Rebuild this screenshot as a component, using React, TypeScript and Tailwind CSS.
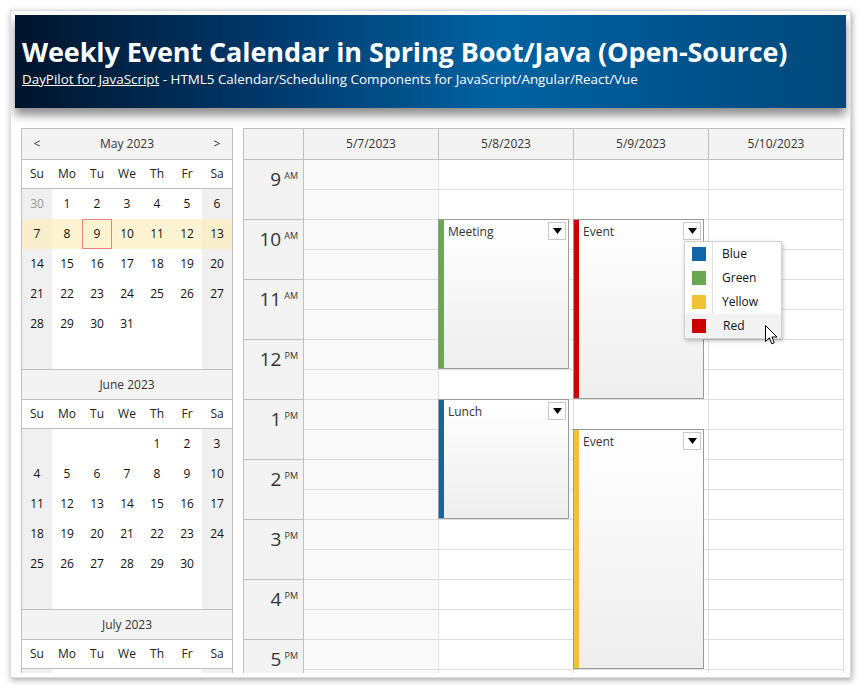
import React from "react";

type Cell = number | null;

const may: Cell[][] = [
  [30, 1, 2, 3, 4, 5, 6],
  [7, 8, 9, 10, 11, 12, 13],
  [14, 15, 16, 17, 18, 19, 20],
  [21, 22, 23, 24, 25, 26, 27],
  [28, 29, 30, 31, null, null, null],
  [null, null, null, null, null, null, null],
];
const june: Cell[][] = [
  [null, null, null, null, 1, 2, 3],
  [4, 5, 6, 7, 8, 9, 10],
  [11, 12, 13, 14, 15, 16, 17],
  [18, 19, 20, 21, 22, 23, 24],
  [25, 26, 27, 28, 29, 30, null],
  [null, null, null, null, null, null, null],
];
const july: Cell[][] = [[null, null, null, null, null, null, null]];

const dayNames = ["Su", "Mo", "Tu", "We", "Th", "Fr", "Sa"];

function Month({
  title,
  weeks,
  arrows,
  isMay,
}: {
  title: string;
  weeks: Cell[][];
  arrows?: boolean;
  isMay?: boolean;
}) {
  return (
    <div className="border-b border-[#c0c0c0]">
      <div
        className={`${isMay ? "h-[31px]" : "h-[30px]"} bg-[#f3f3f3] border-b border-[#c0c0c0] flex items-center text-[12px] text-[#333]`}
      >
        <div className="w-[30px] text-center">{arrows ? "<" : ""}</div>
        <div className="flex-1 text-center">{title}</div>
        <div className="w-[30px] text-center">{arrows ? ">" : ""}</div>
      </div>
      <div className="h-[29px] border-b border-[#c0c0c0] grid grid-cols-7 bg-white text-[12px] text-[#222]">
        {dayNames.map((d) => (
          <div key={d} className="flex items-center justify-center">
            {d}
          </div>
        ))}
      </div>
      <div>
        {weeks.map((w, wi) => {
          const selected = isMay && wi === 1;
          return (
            <div key={wi} className="grid grid-cols-7 h-[30px] text-[12px]">
              {w.map((d, di) => {
                const weekend = di === 0 || di === 6;
                const other = isMay && wi === 0 && di === 0;
                const today = isMay && d === 9;
                let bg = weekend ? "bg-[#f0f0f0]" : "bg-white";
                if (selected) bg = weekend ? "bg-[#f8eecb]" : "bg-[#fff4d1]";
                return (
                  <div
                    key={di}
                    className={`${bg} flex items-center justify-center ${
                      other ? "text-[#999]" : "text-[#111]"
                    } ${today ? "border border-[#f08080]" : ""}`}
                  >
                    {d ?? ""}
                  </div>
                );
              })}
            </div>
          );
        })}
      </div>
    </div>
  );
}

const hours: { h: string; s: string }[] = [
  { h: "9", s: "AM" },
  { h: "10", s: "AM" },
  { h: "11", s: "AM" },
  { h: "12", s: "PM" },
  { h: "1", s: "PM" },
  { h: "2", s: "PM" },
  { h: "3", s: "PM" },
  { h: "4", s: "PM" },
  { h: "5", s: "PM" },
];

const days = ["5/7/2023", "5/8/2023", "5/9/2023", "5/10/2023"];

type Ev = { text: string; top: number; height: number; color: string };
const events: Record<number, Ev[]> = {
  1: [
    { text: "Meeting", top: 59, height: 150, color: "#6aa84f" },
    { text: "Lunch", top: 239, height: 120, color: "#1066a8" },
  ],
  2: [
    { text: "Event", top: 59, height: 180, color: "#cc0000" },
    { text: "Event", top: 269, height: 240, color: "#f1c232" },
  ],
};

function EventBox({ ev }: { ev: Ev }) {
  return (
    <div
      className="absolute left-[-1px] w-[131px] border border-[#999] bg-[linear-gradient(to_bottom,#ffffff,#eeeeee)] flex overflow-hidden"
      style={{ top: ev.top, height: ev.height }}
    >
      <div className="w-[5px] shrink-0" style={{ backgroundColor: ev.color }} />
      <div className="flex-1 pl-[4px] pt-[4px] text-[12px] text-[#333] leading-[16px]">{ev.text}</div>
      <div className="absolute right-[2px] top-[2px] w-[18px] h-[18px] border border-[#c8c8c8] bg-white flex items-center justify-center">
        <svg width="9" height="6" viewBox="0 0 9 6">
          <path d="M0 0 L9 0 L4.5 6 Z" fill="#000" />
        </svg>
      </div>
    </div>
  );
}

export default function App() {
  return (
    <div
      className="relative w-[860px] h-[690px] bg-white overflow-hidden"
      style={{ fontFamily: '"Open Sans", "Noto Sans", sans-serif' }}
    >
      <div className="ml-[10px] mt-[10px] w-[841px] h-[668px] bg-white border border-[#dcdcdc] shadow-[1px_2px_6px_rgba(0,0,0,0.35)] p-[4px] overflow-hidden flex flex-col">
        <div className="relative z-10 h-[93px] shrink-0 bg-[linear-gradient(to_right,#00142a_0%,#00386a_30%,#0062a0_58%,#00548e_80%,#00487a_100%)] shadow-[0_7px_9px_rgba(0,0,0,0.45)] pl-[7px] pt-[19px] text-white">
          <div className="text-[27px] font-bold leading-[36px] tracking-[-0.1px] whitespace-nowrap">
            Weekly Event Calendar in Spring Boot/Java (Open-Source)
          </div>
          <div className="text-[13.4px] leading-[18px] whitespace-nowrap">
            <span className="underline">DayPilot for JavaScript</span> - HTML5 Calendar/Scheduling Components for
            JavaScript/Angular/React/Vue
          </div>
        </div>
        <div className="flex pl-[6px] pt-[20px] gap-[10px] h-[566px] overflow-hidden">
          <div className="w-[212px] shrink-0 border-l border-r border-t border-[#c0c0c0] self-start">
            <Month title="May 2023" weeks={may} arrows isMay />
            <Month title="June 2023" weeks={june} />
            <Month title="July 2023" weeks={july} />
          </div>
          <div className="w-[602px] shrink-0 border-l border-t border-[#c0c0c0] self-start">
            <div className="flex h-[31px]">
              <div className="w-[60px] bg-[#f3f3f3] border-r border-b border-[#c0c0c0]" />
              {days.map((d) => (
                <div
                  key={d}
                  className="w-[135px] bg-[#f3f3f3] border-r border-b border-[#c0c0c0] flex items-center justify-center text-[12px] text-[#333]"
                >
                  {d}
                </div>
              ))}
            </div>
            <div className="flex">
              <div className="w-[60px]">
                {hours.map((h) => (
                  <div
                    key={h.h}
                    className="h-[60px] bg-[#f3f3f3] border-r border-b border-[#c0c0c0] flex justify-end pr-[5px] pt-[7px] text-[#333]"
                  >
                    <span className="text-[19px] leading-[24px]">{h.h}</span>
                    <span className="text-[9px] leading-[12px] ml-[3px] mt-[3px]">{h.s}</span>
                  </div>
                ))}
              </div>
              {days.map((d, i) => (
                <div key={d} className={`relative w-[135px] ${i === 0 ? "bg-[#f9f9f9]" : "bg-white"}`}>
                  {Array.from({ length: 18 }).map((_, k) => (
                    <div key={k} className="h-[30px] border-r border-b border-[#dddddd]" />
                  ))}
                  {(events[i] || []).map((ev, k) => (
                    <EventBox key={k} ev={ev} />
                  ))}
                </div>
              ))}
            </div>
          </div>
        </div>
      </div>

      <div className="absolute left-[684px] top-[241px] w-[98px] bg-white border border-[#d0d0d0] shadow-[1px_2px_4px_rgba(0,0,0,0.25)] text-[12px] text-[#111]">
        {[
          { n: "Blue", c: "#1066a8" },
          { n: "Green", c: "#6aa84f" },
          { n: "Yellow", c: "#f1c232" },
          { n: "Red", c: "#cc0000" },
        ].map((it, k) => (
          <div key={it.n} className={`flex h-[24px] items-stretch ${k === 3 ? "bg-[#f2f2f2]" : ""}`}>
            <div className={`w-[28px] flex items-center justify-center ${k === 3 ? "" : "border-r border-[#e0e0e0]"}`}>
              <div className="w-[14px] h-[14px]" style={{ backgroundColor: it.c }} />
            </div>
            <div className={`flex items-center pl-[9px] ${k === 3 ? "pl-[10px]" : ""}`}>{it.n}</div>
          </div>
        ))}
      </div>

      <svg className="absolute left-[765px] top-[325px]" width="14" height="21" viewBox="0 0 14 21">
        <path
          d="M0.5 0.5 L0.5 16.5 L4.3 12.8 L6.8 18.8 L9.3 17.7 L6.9 12 L12 12 Z"
          fill="#fff"
          stroke="#000"
          strokeWidth="1"
          strokeLinejoin="round"
        />
      </svg>
    </div>
  );
}
